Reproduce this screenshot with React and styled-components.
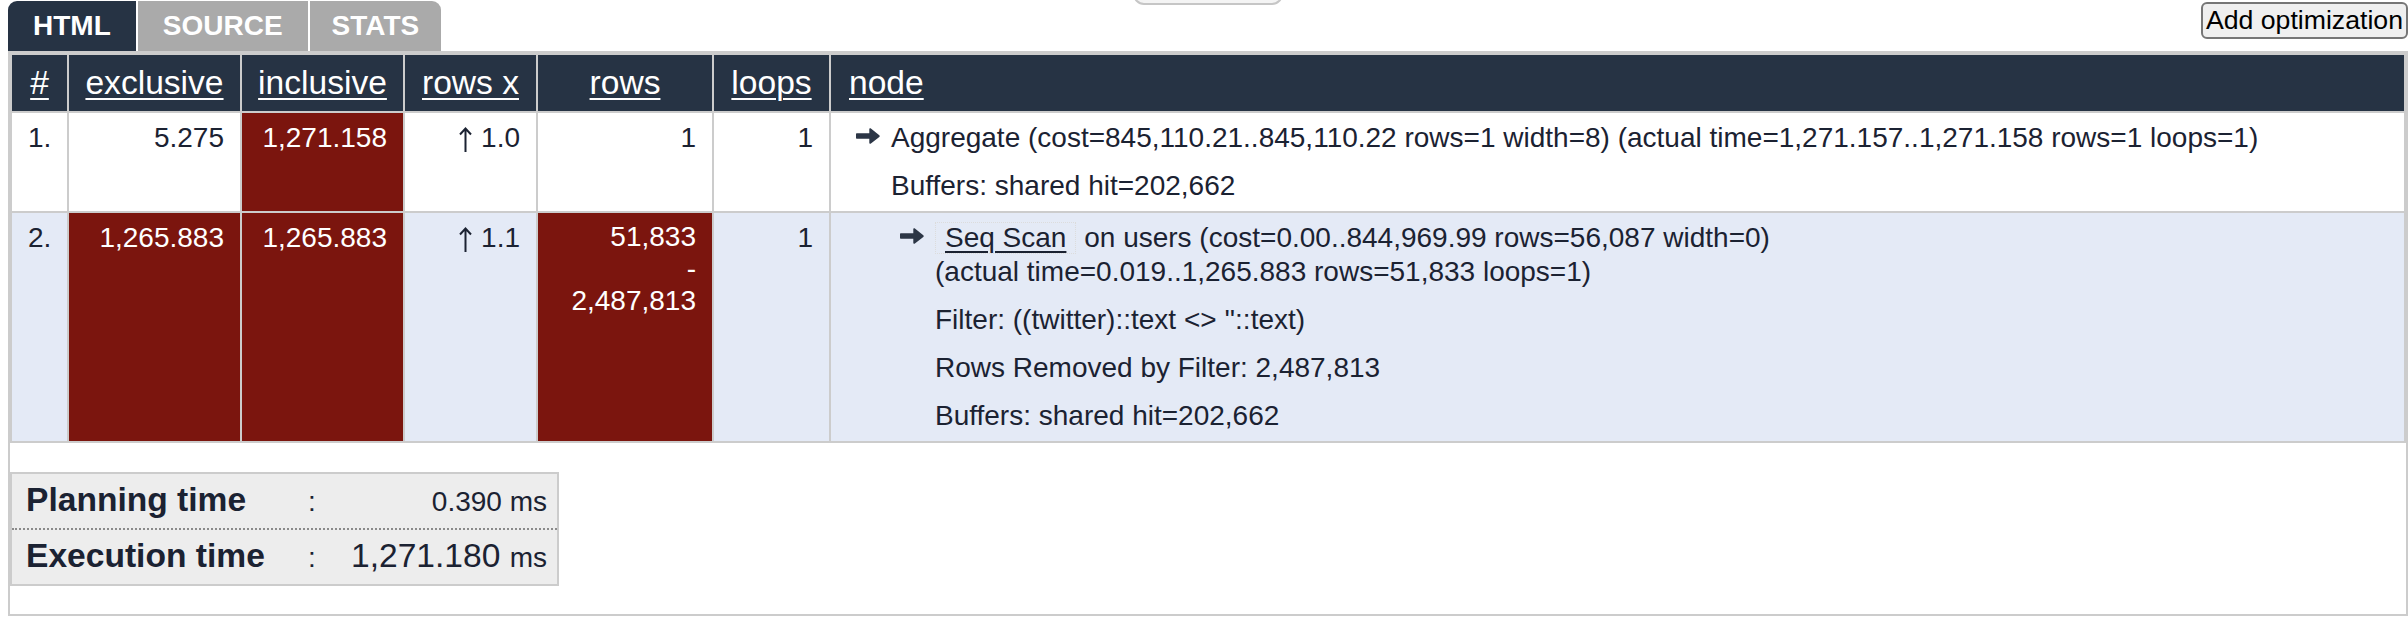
import React from "react";
import styled, { createGlobalStyle } from "styled-components";

const GlobalStyle = createGlobalStyle`
  html, body { margin: 0; padding: 0; background: #ffffff; }
  body {
    font-family: "Liberation Sans", Arial, Helvetica, sans-serif;
    font-size: 28px;
    color: #1b2232;
  }
  * { box-sizing: border-box; }
`;

const Page = styled.div`
  padding: 1px 0 0 8px;
`;

const TopBar = styled.div`
  display: grid;
  grid-template-columns: 1fr auto 1fr;
  align-items: start;
  height: 50px;
`;

const Tabs = styled.div`
  justify-self: start;
  display: flex;
  gap: 2px;
  height: 50px;
  border-radius: 9px 9px 0 0;
  overflow: hidden;
`;

const Tab = styled.div`
  display: flex;
  align-items: center;
  height: 50px;
  padding: 0 ${(p) => p.$pad || 25}px;
  font-size: 28px;
  font-weight: bold;
  color: #ffffff;
  background: ${(p) => (p.$active ? "#263344" : "#aaaaaa")};
`;

const Handle = styled.div`
  width: 150px;
  height: 40px;
  margin-top: -36px;
  border: 2px solid #c6c6c6;
  border-radius: 11px;
  background: #f4f4f4;
`;

const AddButton = styled.button`
  justify-self: end;
  margin-top: 1px;
  padding: 1px 3px;
  font-family: "Liberation Sans", Arial, Helvetica, sans-serif;
  font-size: 26.67px;
  line-height: 31px;
  color: #000000;
  background: #efefef;
  border: 2px solid #767676;
  border-radius: 6px;
`;

const Panel = styled.div`
  border: 2px solid #cccccc;
  padding-bottom: 28px;
`;

const PlanTable = styled.table`
  width: 100%;
  table-layout: fixed;
  border-collapse: separate;
  border-spacing: 2px;
  background: #cccccc;
`;

const Th = styled.th`
  width: ${(p) => (p.$w ? `${p.$w}px` : "auto")};
  padding: 8px 16px 8px ${(p) => (p.$align === "left" ? 18 : 16)}px;
  background: #263344;
  color: #ffffff;
  font-size: 33.6px;
  font-weight: normal;
  line-height: 40px;
  text-align: ${(p) => p.$align || "center"};
  white-space: nowrap;
`;

const HeadLink = styled.a`
  color: #ffffff;
  text-decoration: underline;
  text-decoration-thickness: 2px;
  text-underline-offset: 4px;
`;

const Tr = styled.tr`
  background: ${(p) => (p.$alt ? "#e4eaf6" : "#ffffff")};
`;

const Td = styled.td`
  vertical-align: top;
  padding: 8px 16px 8px ${(p) => (p.$align === "left" ? 18 : 16)}px;
  line-height: 34px;
  text-align: ${(p) => p.$align || "right"};
  white-space: nowrap;
  ${(p) => (p.$hot ? "background: #7b150e; color: #ffffff;" : "")}
`;

const UpArrow = styled.svg`
  width: 13px;
  height: 25px;
  margin-right: 9px;
  vertical-align: -5px;
`;

const RangeStack = styled.div`
  display: flex;
  flex-direction: column;
  align-items: flex-end;
  line-height: 32px;
`;

const NodeHead = styled.div`
  display: flex;
  align-items: flex-start;
  padding-left: ${(p) => 7 + p.$level * 44}px;
`;

const ArrowIcon = styled.svg`
  flex: none;
  width: 24px;
  height: 16px;
  margin: 7px 11px 0 0;
`;

const NodeText = styled.div`
  display: flex;
  flex-direction: column;
  gap: 14px;
  text-align: left;
`;

const NodeLine = styled.div`
  line-height: 34px;
`;

const NodeLink = styled.a`
  display: inline-block;
  padding: 0 9px;
  line-height: 30px;
  border: 1px dotted #dcdcdc;
  color: #1b2232;
  text-decoration: underline;
  text-decoration-thickness: 2px;
  text-underline-offset: 4px;
`;

const Summary = styled.div`
  width: 549px;
  margin-top: 29px;
  border: 2px solid #cccccc;
  background: #ededed;
`;

const SummaryRow = styled.div`
  display: grid;
  grid-template-columns: 274px 24px 1fr;
  align-items: baseline;
  padding: 9px 10px 9px 14px;
  line-height: 34px;
  & + & {
    border-top: 2px dotted #8a8a8a;
  }
`;

const SumLabel = styled.span`
  font-size: 33.6px;
  font-weight: bold;
  white-space: nowrap;
`;

const Colon = styled.span`
  font-size: 28px;
  text-align: center;
`;

const SumValue = styled.span`
  text-align: right;
  white-space: nowrap;
  font-size: ${(p) => p.$size}px;
`;

const Unit = styled.span`
  font-size: 28px;
`;

function Arrow() {
  return (
    <ArrowIcon viewBox="0 0 24 16">
      <path
        d="M1 5.3h12.3V1.3c0-.9 1-1.3 1.6-.7l8.4 6.6c.6.5.6 1.3 0 1.7l-8.4 6.6c-.6.6-1.6.2-1.6-.7v-4H1c-.6 0-1-.4-1-1V6.3c0-.6.4-1 1-1z"
        fill="#2c3646"
      />
    </ArrowIcon>
  );
}

function Up() {
  return (
    <UpArrow viewBox="0 0 13 25">
      <path
        d="M6.5 2V25M1 7.5L6.5 1.5L12 7.5"
        fill="none"
        stroke="currentColor"
        strokeWidth="2"
        strokeLinejoin="miter"
      />
    </UpArrow>
  );
}

const columns = [
  { key: "#", w: 55 },
  { key: "exclusive", w: 171 },
  { key: "inclusive", w: 161 },
  { key: "rows x", w: 131 },
  { key: "rows", w: 174 },
  { key: "loops", w: 115 },
  { key: "node", align: "left" },
];

export default function App() {
  return (
    <>
      <GlobalStyle />
      <Page>
        <TopBar>
          <Tabs>
            <Tab $active>HTML</Tab>
            <Tab>SOURCE</Tab>
            <Tab $pad={22}>STATS</Tab>
          </Tabs>
          <Handle />
          <AddButton type="button">Add optimization</AddButton>
        </TopBar>
        <Panel>
          <PlanTable>
            <thead>
              <tr>
                {columns.map((c) => (
                  <Th key={c.key} $w={c.w} $align={c.align}>
                    <HeadLink href="#">{c.key}</HeadLink>
                  </Th>
                ))}
              </tr>
            </thead>
            <tbody>
              <Tr>
                <Td $align="center">1.</Td>
                <Td>5.275</Td>
                <Td $hot>1,271.158</Td>
                <Td>
                  <Up />
                  1.0
                </Td>
                <Td>1</Td>
                <Td>1</Td>
                <Td $align="left">
                  <NodeHead $level={0}>
                    <Arrow />
                    <NodeText>
                      <NodeLine>
                        Aggregate (cost=845,110.21..845,110.22 rows=1 width=8) (actual
                        time=1,271.157..1,271.158 rows=1 loops=1)
                      </NodeLine>
                      <NodeLine>Buffers: shared hit=202,662</NodeLine>
                    </NodeText>
                  </NodeHead>
                </Td>
              </Tr>
              <Tr $alt>
                <Td $align="center">2.</Td>
                <Td $hot>1,265.883</Td>
                <Td $hot>1,265.883</Td>
                <Td>
                  <Up />
                  1.1
                </Td>
                <Td $hot>
                  <RangeStack>
                    <span>51,833</span>
                    <span>-</span>
                    <span>2,487,813</span>
                  </RangeStack>
                </Td>
                <Td>1</Td>
                <Td $align="left">
                  <NodeHead $level={1}>
                    <Arrow />
                    <NodeText>
                      <NodeLine>
                        <NodeLink href="#">Seq Scan</NodeLink> on users
                        (cost=0.00..844,969.99 rows=56,087 width=0)
                        <br />
                        (actual time=0.019..1,265.883 rows=51,833 loops=1)
                      </NodeLine>
                      <NodeLine>Filter: ((twitter)::text &lt;&gt; ''::text)</NodeLine>
                      <NodeLine>Rows Removed by Filter: 2,487,813</NodeLine>
                      <NodeLine>Buffers: shared hit=202,662</NodeLine>
                    </NodeText>
                  </NodeHead>
                </Td>
              </Tr>
            </tbody>
          </PlanTable>
          <Summary>
            <SummaryRow>
              <SumLabel>Planning time</SumLabel>
              <Colon>:</Colon>
              <SumValue $size={28}>
                0.390 <Unit>ms</Unit>
              </SumValue>
            </SummaryRow>
            <SummaryRow>
              <SumLabel>Execution time</SumLabel>
              <Colon>:</Colon>
              <SumValue $size={33.6}>
                1,271.180 <Unit>ms</Unit>
              </SumValue>
            </SummaryRow>
          </Summary>
        </Panel>
      </Page>
    </>
  );
}
